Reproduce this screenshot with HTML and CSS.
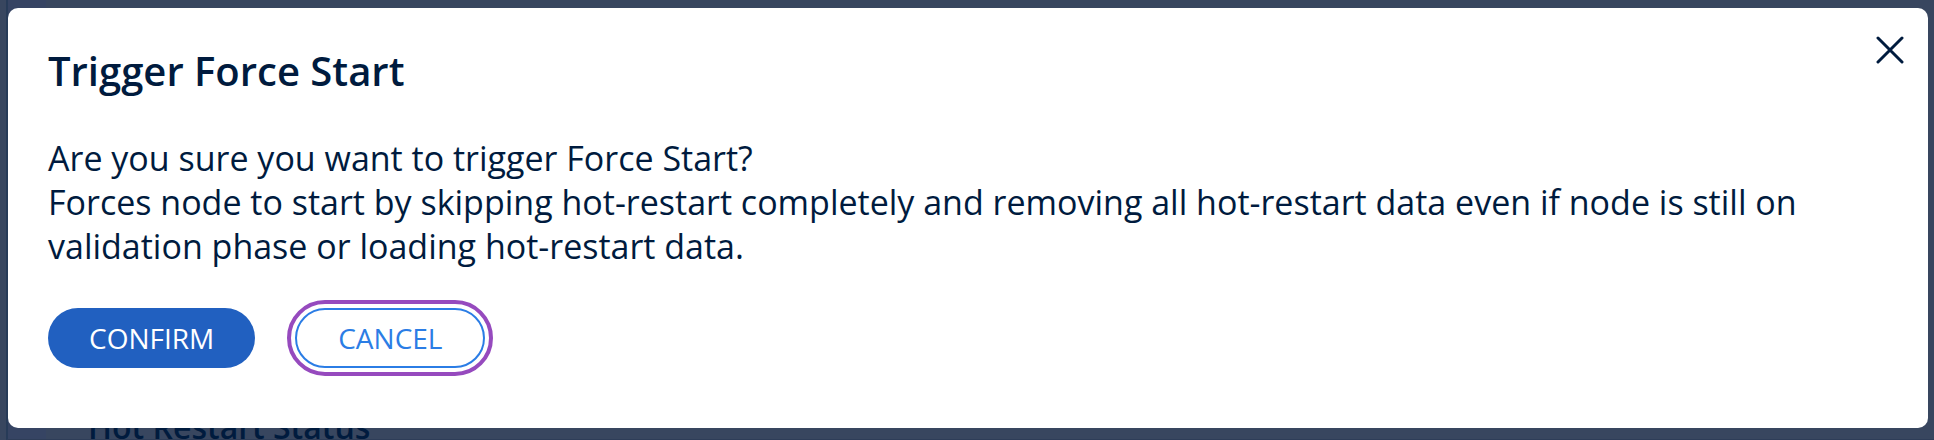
FILE: index.html
```html
<!DOCTYPE html>
<html lang="en">
<head>
<meta charset="utf-8">
<title>Trigger Force Start</title>
<link rel="stylesheet" href="styles.css">
</head>
<body>
<div class="page">
  <main class="panel">
    <h2 class="panel-title">Hot Restart Status</h2>
  </main>
  <div class="overlay">
    <section class="modal" role="dialog" aria-modal="true" aria-labelledby="title">
      <header class="modal-header">
        <h1 class="modal-title" id="title">Trigger Force Start</h1>
        <button class="close" type="button" aria-label="Close">
          <svg viewBox="0 0 28 28" width="28" height="28" fill="none" stroke="currentColor" stroke-width="3" stroke-linecap="round" aria-hidden="true"><path d="M2 2 26 26M26 2 2 26"/></svg>
        </button>
      </header>
      <p class="modal-text">Are you sure you want to trigger Force Start?<br>Forces node to start by skipping hot-restart completely and removing all hot-restart data even if node is still on validation phase or loading hot-restart data.</p>
      <div class="actions">
        <button class="button button-primary" type="button">CONFIRM</button>
        <button class="button button-outline" type="button">CANCEL</button>
      </div>
    </section>
  </div>
</div>
</body>
</html>
```
FILE: styles.css
```css
* { box-sizing: border-box; }
body {
  margin: 0;
  font-family: "Open Sans", "Noto Sans", sans-serif;
  color: #001b3e;
}
.page {
  position: relative;
  display: flex;
  height: 100vh;
  padding-left: 6px;
  background: #38465f;
  overflow: hidden;
}
.panel {
  flex: 1;
  display: flex;
  align-items: flex-end;
  padding-left: 80px;
  border-left: 2px solid #273b58;
  border-bottom: 1px solid #2e3d58;
  background: linear-gradient(to right, #364463 38px, #38465f 38px);
}
.panel-title {
  margin: 0;
  font-size: 32px;
  font-weight: 600;
  line-height: 24px;
}
.overlay {
  position: absolute;
  inset: 0;
  padding: 8px 6px 12px 8px;
}
.modal {
  min-height: 100%;
  padding: 40px;
  border-radius: 10px;
  background: #fff;
}
.modal-header {
  display: flex;
  justify-content: space-between;
  align-items: flex-start;
  margin-right: -16px;
}
.modal-title {
  margin: 0;
  font-size: 40px;
  font-weight: 600;
  line-height: 46px;
}
.close {
  display: flex;
  margin-top: -12px;
  padding: 0;
  border: 0;
  background: none;
  color: inherit;
}
.modal-text {
  margin: 42px 0 40px;
  font-size: 34px;
  line-height: 44px;
}
.actions {
  display: flex;
  gap: 40px;
}
.button {
  height: 60px;
  padding: 0 40px;
  border: 0;
  border-radius: 30px;
  font-family: inherit;
  font-size: 28px;
}
.button-primary {
  padding: 0 41px;
  background: #2160c0;
  color: #fff;
}
.button-outline {
  border: 2px solid #2b7de5;
  padding: 0 41px;
  background: #fff;
  color: #2b7de5;
  outline: 4px solid #964abe;
  outline-offset: 4px;
}
```
